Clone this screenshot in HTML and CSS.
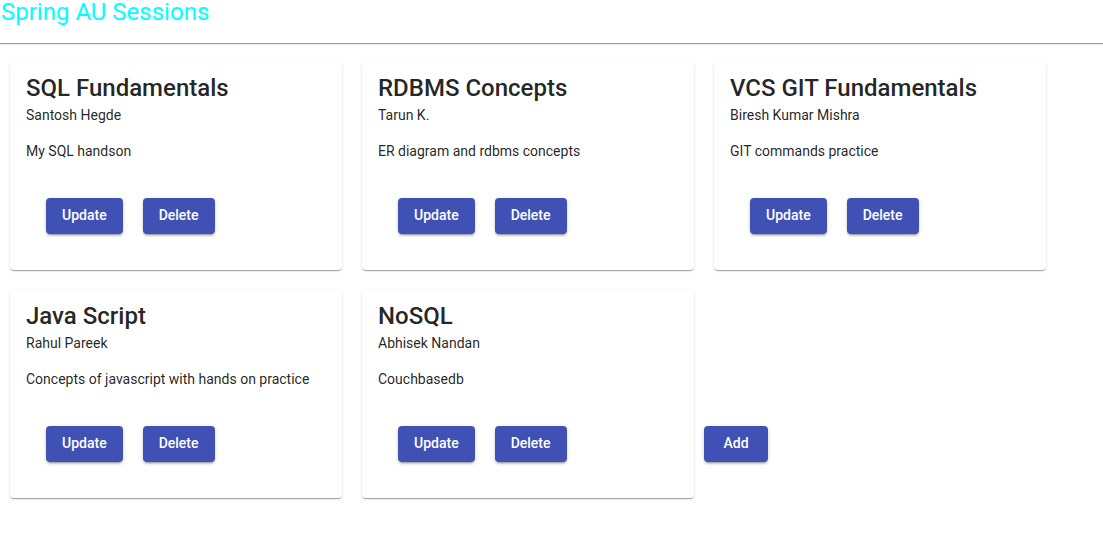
FILE: index.html
```html
<!DOCTYPE html>
<html>
<head>
<meta charset="utf-8">
<title>Spring AU Sessions</title>
<link rel="stylesheet" href="styles.css">
</head>
<body>
<h1 class="app-title">Spring AU Sessions</h1>
<hr class="divider">
<div class="sessions">
  <div class="card">
    <div class="card-title">SQL Fundamentals</div>
    <div class="card-subtitle">Santosh Hegde</div>
    <p class="card-content">My SQL handson</p>
    <div class="card-actions">
      <button class="btn">Update</button>
      <button class="btn">Delete</button>
    </div>
  </div>
  <div class="card">
    <div class="card-title">RDBMS Concepts</div>
    <div class="card-subtitle">Tarun K.</div>
    <p class="card-content">ER diagram and rdbms concepts</p>
    <div class="card-actions">
      <button class="btn">Update</button>
      <button class="btn">Delete</button>
    </div>
  </div>
  <div class="card">
    <div class="card-title">VCS GIT Fundamentals</div>
    <div class="card-subtitle">Biresh Kumar Mishra</div>
    <p class="card-content">GIT commands practice</p>
    <div class="card-actions">
      <button class="btn">Update</button>
      <button class="btn">Delete</button>
    </div>
  </div>
  <div class="card">
    <div class="card-title">Java Script</div>
    <div class="card-subtitle">Rahul Pareek</div>
    <p class="card-content">Concepts of javascript with hands on practice</p>
    <div class="card-actions">
      <button class="btn">Update</button>
      <button class="btn">Delete</button>
    </div>
  </div>
  <div class="card">
    <div class="card-title">NoSQL</div>
    <div class="card-subtitle">Abhisek Nandan</div>
    <p class="card-content">Couchbasedb</p>
    <div class="card-actions">
      <button class="btn">Update</button>
      <button class="btn">Delete</button>
    </div>
  </div>
  <button class="btn btn-add">Add</button>
</div>
</body>
</html>
```

FILE: styles.css
```css
html, body {
  margin: 0;
  padding: 0;
  background: #fff;
  font-family: Roboto, "Helvetica Neue", sans-serif;
}

.app-title {
  margin: 0;
  font-size: 24px;
  line-height: 24px;
  font-weight: 400;
  color: #00ffff;
  padding-left: 1px;
}

.divider {
  margin: 19px 0 7px;
  border: 0;
  border-top: 1px solid #9a9a9a;
  border-bottom: 1px solid #eeeeee;
  height: 0;
}

.sessions {
  display: flex;
  flex-wrap: wrap;
  align-items: flex-start;
}

.card {
  width: 332px;
  box-sizing: border-box;
  margin: 10px;
  padding: 14px 16px 36px;
  background: #fff;
  border-radius: 4px;
  box-shadow: 0 2px 1px -1px rgba(0,0,0,.2), 0 1px 1px 0 rgba(0,0,0,.14), 0 1px 3px 0 rgba(0,0,0,.12);
  color: rgba(0,0,0,.87);
}

.card-title {
  font-size: 24px;
  line-height: 24px;
  font-weight: 500;
}

.card-subtitle {
  margin-top: 5px;
  font-size: 14px;
  line-height: 20px;
}

.card-content {
  margin: 16px 0 0;
  font-size: 14px;
  line-height: 20px;
}

.card-actions {
  display: flex;
  gap: 20px;
  padding-left: 20px;
  margin-top: 37px;
}

.btn {
  box-sizing: border-box;
  height: 36px;
  min-width: 64px;
  padding: 0 16px 2px;
  border: 0;
  border-radius: 4px;
  background: #3f51b5;
  color: #fff;
  font-family: Roboto, "Helvetica Neue", sans-serif;
  font-size: 14px;
  font-weight: 500;
  line-height: 34px;
  box-shadow: 0 3px 1px -2px rgba(0,0,0,.2), 0 2px 2px 0 rgba(0,0,0,.14), 0 1px 5px 0 rgba(0,0,0,.12);
  cursor: pointer;
}

.btn-add {
  margin: 146px 0 0;
}
```
